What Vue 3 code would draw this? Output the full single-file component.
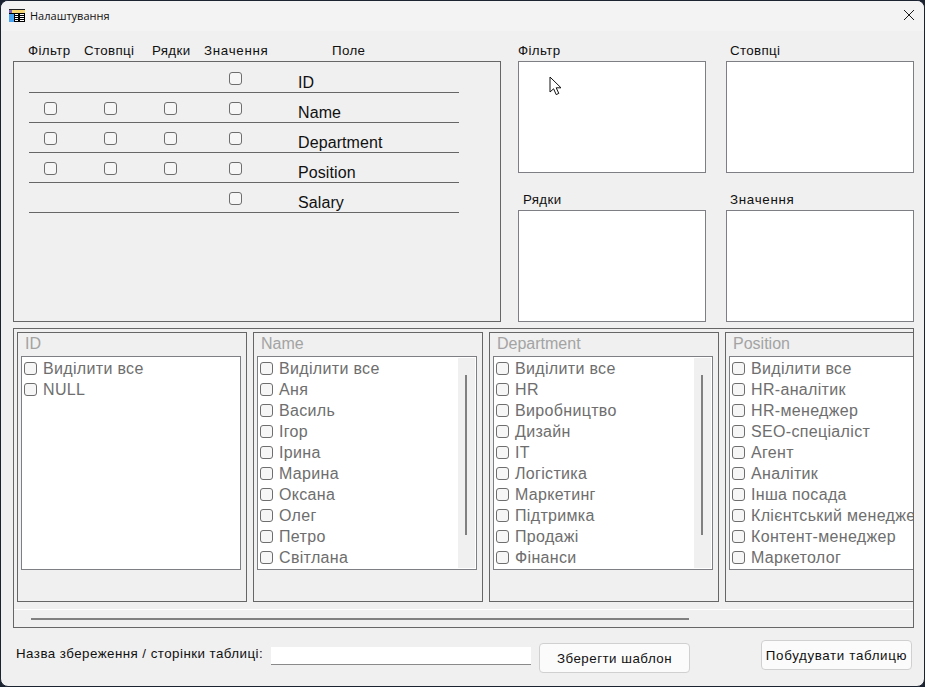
<script setup>
const fields = [
  { name: 'ID', full: false },
  { name: 'Name', full: true },
  { name: 'Department', full: true },
  { name: 'Position', full: true },
  { name: 'Salary', full: false },
]

const cards = [
  { title: 'ID', scroll: false, items: ['Виділити все', 'NULL'] },
  { title: 'Name', scroll: true, items: ['Виділити все', 'Аня', 'Василь', 'Ігор', 'Ірина', 'Марина', 'Оксана', 'Олег', 'Петро', 'Світлана'] },
  { title: 'Department', scroll: true, items: ['Виділити все', 'HR', 'Виробництво', 'Дизайн', 'IT', 'Логістика', 'Маркетинг', 'Підтримка', 'Продажі', 'Фінанси'] },
  { title: 'Position', scroll: false, items: ['Виділити все', 'HR-аналітик', 'HR-менеджер', 'SEO-спеціаліст', 'Агент', 'Аналітик', 'Інша посада', 'Клієнтський менеджер', 'Контент-менеджер', 'Маркетолог'] },
]
</script>

<template>
  <div class="window">
    <div class="titlebar">
      <svg class="app-icon" width="16" height="13" viewBox="0 0 16 13">
        <rect x="0" y="0" width="16" height="13" fill="#fff" />
        <rect x="0" y="0" width="16" height="1" fill="#222" />
        <rect x="0" y="1" width="16" height="3" fill="#f7d774" />
        <rect x="0" y="4" width="5" height="9" fill="#4aa3ee" />
        <rect x="0" y="1" width="3" height="3" fill="#7a5fb5" />
        <path d="M0 4.5H16M5 6.5H16M5 8.5H16M5 10.5H16M5 12.5H16M5.5 4V13M9.5 4V13M10.5 4V13M15.5 4V13" stroke="#000" stroke-width="1" fill="none" />
      </svg>
      <span class="title">Налаштування</span>
      <svg class="close" width="12" height="12" viewBox="0 0 12 12">
        <path d="M1 1L11 11M11 1L1 11" stroke="#1a1a1a" stroke-width="1" fill="none" />
      </svg>
    </div>

    <div class="content">
      <div class="top">
        <div class="left">
          <div class="heads">
            <span class="h-filter">Фільтр</span>
            <span class="h-cols">Стовпці</span>
            <span class="h-rows">Рядки</span>
            <span class="h-vals">Значення</span>
            <span class="h-field">Поле</span>
          </div>
          <div class="table-box">
            <div v-for="f in fields" :key="f.name" class="row">
              <input v-if="f.full" type="checkbox" class="cb" />
              <span v-else></span>
              <input v-if="f.full" type="checkbox" class="cb" />
              <span v-else></span>
              <input v-if="f.full" type="checkbox" class="cb" />
              <span v-else></span>
              <input type="checkbox" class="cb" />
              <span class="field-name">{{ f.name }}</span>
            </div>
          </div>
        </div>

        <div class="zones">
          <div class="zone">
            <div class="zone-label">Фільтр</div>
            <div class="zone-box">
              <svg class="cursor" width="13" height="20" viewBox="0 0 13 20">
                <path d="M1 1V16L4.6 12.8L7.2 18.6L9.8 17.4L7.2 11.8H12L1 1Z" fill="#fff" stroke="#111" stroke-width="1" stroke-linejoin="round" />
              </svg>
            </div>
          </div>
          <div class="zone">
            <div class="zone-label shift-c">Стовпці</div>
            <div class="zone-box"></div>
          </div>
          <div class="zone">
            <div class="zone-label shift-r">Рядки</div>
            <div class="zone-box"></div>
          </div>
          <div class="zone">
            <div class="zone-label shift-c wide">Значення</div>
            <div class="zone-box"></div>
          </div>
        </div>
      </div>

      <div class="filters">
        <div class="cards">
          <div v-for="c in cards" :key="c.title" class="card">
            <div class="card-title">{{ c.title }}</div>
            <div class="list">
              <div v-for="item in c.items" :key="item" class="item">
                <input type="checkbox" class="cb" />
                <span class="item-text">{{ item }}</span>
              </div>
              <div v-if="c.scroll" class="vscroll"><div class="vthumb"></div></div>
            </div>
          </div>
        </div>
        <div class="hscroll"><div class="hthumb"></div></div>
      </div>

      <div class="footer">
        <span class="save-label">Назва збереження / сторінки таблиці:</span>
        <input class="save-input" type="text" />
        <button class="btn btn-save">Зберегти шаблон</button>
        <button class="btn btn-build">Побудувати таблицю</button>
      </div>
    </div>
  </div>
</template>

<style scoped>
.window {
  width: 923px;
  height: 685px;
  border: 1px solid #1b2230;
  border-radius: 8px;
  overflow: hidden;
  background: #f0f0f0;
  display: flex;
  flex-direction: column;
  font-family: "Liberation Sans", Arial, sans-serif;
  color: #111;
}

.titlebar {
  height: 30px;
  flex: none;
  box-sizing: border-box;
  background: #f3f3f3;
  display: flex;
  align-items: center;
  padding: 0 9px 1px 8px;
}

.app-icon {
  margin-right: 5px;
}

.title {
  font-family: "Open Sans", sans-serif;
  font-size: 11px;
  flex: 1;
}

.close {
  margin-bottom: 1px;
}

.content {
  flex: 1;
  padding: 12px 10px 0 12px;
  display: flex;
  flex-direction: column;
}

.top {
  display: flex;
  height: 279px;
  flex: none;
}

.left {
  width: 488px;
  flex: none;
  display: flex;
  flex-direction: column;
}

.heads {
  height: 18px;
  flex: none;
  display: flex;
  font-size: 13.33px;
  letter-spacing: 0.35px;
  line-height: 15px;
}

.h-filter { margin-left: 15px; width: 56px; }
.h-cols { width: 68px; }
.h-rows { width: 52px; }
.h-vals { width: 128px; letter-spacing: 0.7px; }

.table-box {
  flex: 1;
  border: 1px solid #666;
  padding-top: 1px;
}

.row {
  height: 29px;
  width: 415px;
  margin-left: 15px;
  border-bottom: 1px solid #666;
  display: grid;
  grid-template-columns: 60px 60px 65px 69px 1fr;
  padding-left: 15px;
}

.cb {
  appearance: none;
  width: 13px;
  height: 13px;
  margin: 9px 0 0;
  border: 1px solid #6e6e6e;
  border-radius: 3px;
  background: #f6f6f6;
  box-sizing: border-box;
}

.field-name {
  font-size: 16px;
  letter-spacing: 0.1px;
  line-height: 18px;
  padding-top: 11px;
  color: #111;
}

.zones {
  margin-left: 17px;
  display: grid;
  grid-template-columns: 188px 188px;
  grid-template-rows: 130px 130px;
  column-gap: 20px;
  row-gap: 19px;
}

.zone {
  display: flex;
  flex-direction: column;
}

.zone-label {
  height: 18px;
  flex: none;
  font-size: 13.33px;
  letter-spacing: 0.35px;
  line-height: 15px;
}

.zone-label.wide { letter-spacing: 0.7px; }

.shift-c { padding-left: 4px; }
.shift-r { padding-left: 5px; }

.zone-box {
  flex: 1;
  background: #fff;
  border: 1px solid #7d7f85;
  position: relative;
}

.cursor {
  position: absolute;
  left: 30px;
  top: 14px;
}

.filters {
  margin-top: 6px;
  height: 300px;
  flex: none;
  border: 1px solid #666;
  box-sizing: border-box;
  overflow: hidden;
  display: flex;
  flex-direction: column;
}

.cards {
  display: flex;
  gap: 6px;
  padding: 3px 0 0 3px;
  overflow: hidden;
  flex: none;
  height: 270px;
}

.card {
  width: 230px;
  height: 270px;
  flex: none;
  border: 1px solid #666;
  box-sizing: border-box;
  padding: 0 5px 0 3px;
}

.card-title {
  height: 23px;
  font-size: 16px;
  line-height: 21px;
  color: #a3a3a3;
  padding-left: 4px;
}

.list {
  height: 214px;
  background: #fff;
  border: 1px solid #7d7f85;
  box-sizing: border-box;
  padding: 1px 0 0 2px;
  position: relative;
  overflow: hidden;
}

.item {
  height: 21px;
  display: flex;
  align-items: center;
  white-space: nowrap;
}

.item .cb {
  margin: 0 6px 0 0;
  flex: none;
}

.item-text {
  font-size: 16px;
  letter-spacing: 0.33px;
  color: #6e6e6e;
}

.vscroll {
  position: absolute;
  right: 1px;
  top: 1px;
  bottom: 1px;
  width: 17px;
  background: #f0f0f0;
}

.vthumb {
  position: absolute;
  left: 7px;
  top: 17px;
  width: 2px;
  height: 160px;
  background: #808080;
}

.hscroll {
  flex: 1;
  margin-top: 7px;
  border-top: 1px solid #fff;
  position: relative;
}

.hthumb {
  position: absolute;
  left: 17px;
  top: 8px;
  height: 2px;
  width: 658px;
  background: #808080;
}

.footer {
  flex: 1;
  display: flex;
  align-items: flex-start;
}

.save-label {
  font-size: 13.33px;
  letter-spacing: 0.46px;
  width: 255px;
  flex: none;
  margin: 18px 0 0 3px;
  line-height: 15px;
  white-space: nowrap;
}

.save-input {
  width: 260px;
  height: 18px;
  margin-top: 19px;
  padding: 0;
  border: none;
  border-bottom: 1px solid #8a8a8a;
  box-sizing: border-box;
  background: #fff;
  outline: none;
}

.btn {
  font-family: "Liberation Sans", Arial, sans-serif;
  font-size: 13.33px;
  color: #111;
  width: 151px;
  height: 30px;
  padding: 0;
  background: #fbfbfb;
  border: 1px solid #d0d0d0;
  border-radius: 4px;
  white-space: nowrap;
}

.btn-save {
  margin: 15px 0 0 8px;
  letter-spacing: 0.5px;
}

.btn-build {
  margin: 12px 0 0 71px;
  letter-spacing: 0.65px;
}
</style>

<style>
html, body {
  margin: 0;
  background: #1b2230;
  overflow: hidden;
}
</style>
